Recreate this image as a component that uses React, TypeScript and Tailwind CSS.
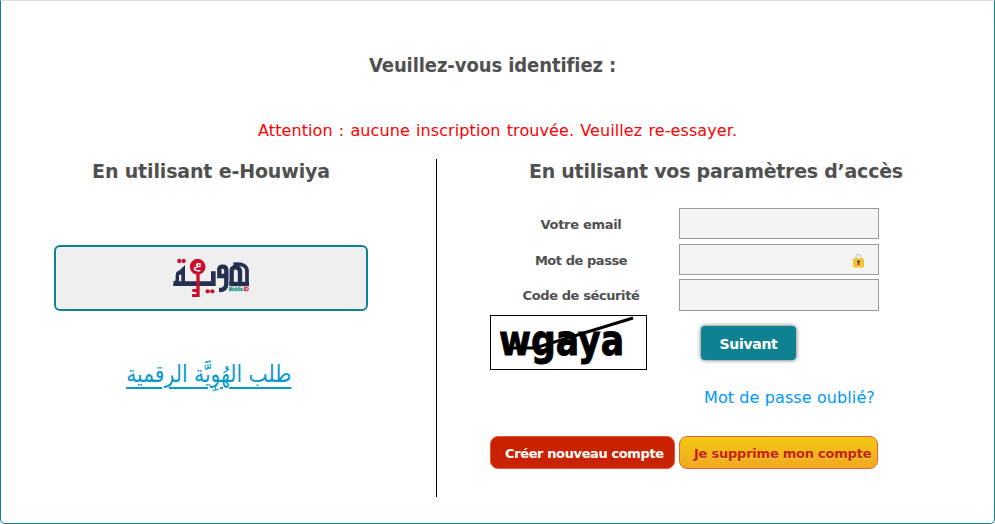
import React from "react";

const bold = "font-['DejaVu_Sans_Condensed','DejaVu_Sans',sans-serif] [font-stretch:condensed] font-bold whitespace-nowrap";
const wideBold = "font-['DejaVu_Sans',sans-serif] font-bold whitespace-nowrap";
const regular = "font-['DejaVu_Sans',sans-serif] whitespace-nowrap";

function HouwiyaLogo() {
  return (
    <svg className="ml-[2px] mb-[2px]" width="83.33" height="45" viewBox="390 60 250 135" fill="none">
      <g stroke="#252f50" strokeWidth="11">
        <path d="M400 146H520V109" strokeWidth="14" />
        <path d="M400 153L407 132V122Q407 109 419 106L435 90V140H424V119H417V140Z" fill="#252f50" stroke="none" />
        <path d="M559 123H538V103Q538 95 548 95Q559 95 559 106V146Q559 165 537 165" strokeWidth="13" />
        <path d="M568 147H627" strokeWidth="13" />
        <path d="M575 146V107Q575 97 586 97Q598 97 600 108V146" strokeWidth="13" />
        <path d="M580 88Q621 84 621 108V146" strokeWidth="11" />
      </g>
      <g fill="#c8102e">
        <circle cx="418" cy="78" r="6.5" />
        <circle cx="431" cy="78" r="6.5" />
        <circle cx="503" cy="169" r="6.5" />
        <circle cx="517" cy="169" r="6.5" />
        <circle cx="473" cy="95" r="23.5" />
        <path d="M469 116H479V186H456V177H469V171H457V162H469Z" />
      </g>
      <path d="M483 88Q472 83 470 90Q470 95 482 94Q464 96 463 102Q467 109 481 107" stroke="#fff" strokeWidth="4.5" />
      <text x="566" y="167" fontSize="15" fontFamily="Liberation Sans, sans-serif" fontWeight="bold" fill="#159487" stroke="#159487" strokeWidth="0.8" textLength="42" lengthAdjust="spacingAndGlyphs">Mobile</text>
      <text x="611" y="167" fontSize="15" fontFamily="Liberation Sans, sans-serif" fontWeight="bold" fill="#d32345" stroke="#d32345" strokeWidth="0.8" textLength="16" lengthAdjust="spacingAndGlyphs">ID</text>
    </svg>
  );
}

function Lock() {
  return (
    <svg className="mt-px" width="11" height="15" viewBox="0 0 11 15" fill="none">
      <path d="M3 6V4Q3 1.2 5.5 1.2Q8 1.2 8 4V6" stroke="#d4d4d4" strokeWidth="1.4" />
      <rect y="5.3" width="11" height="9.2" rx="1.3" fill="#fbc02d" />
      <path d="M4 8.2H7M5.5 7.5V12" stroke="#45405b" strokeWidth="1.5" />
    </svg>
  );
}

function Field({ label, className, spacing, children }: { label: string; className: string; spacing: string; children?: React.ReactNode }) {
  return (
    <div className={`flex items-center ${className}`}>
      <div className={`w-[189px] pr-[7px] pt-[2px] text-center text-[13px] text-[#505050] ${wideBold} ${spacing}`}>{label}</div>
      <div className="flex h-full w-[200px] items-center justify-end border border-[#999] bg-[#f4f4f4] pr-[14px]">{children}</div>
    </div>
  );
}

export default function App() {
  return (
    <div className="flex h-[524px] w-[995px] flex-col overflow-hidden rounded-b-[5px] border border-[#0f8292] border-t-[#ddd] bg-white">
      <h1 className={`mt-[49px] h-[30px] self-start pl-[368px] text-[20px] leading-[30px] tracking-[-0.08px] text-[#505050] ${bold}`}>Veuillez-vous identifiez :</h1>
      <p className={`mt-[39px] h-[24px] self-start pl-[257px] text-[16px] leading-[24px] tracking-[0.1px] [word-spacing:0.9px] text-[#f00] ${regular}`}>Attention : aucune inscription trouvée. Veuillez re-essayer.</p>
      <div className="mt-[16px] flex h-[338px]">
        <section className="flex w-[436px] flex-col items-center border-r border-black pr-[15px]">
          <h2 className={`h-[24px] text-[19px] leading-[24px] tracking-[-0.15px] text-[#505050] ${wideBold}`}>En utilisant e-Houwiya</h2>
          <button className="mt-[62px] flex h-[66px] w-[314px] items-center justify-center rounded-[6px] border-2 border-[#0f8292] bg-[#efefef]">
            <HouwiyaLogo />
          </button>
          <a dir="rtl" className="mr-[5px] mt-[43px] inline-block scale-x-[0.845] whitespace-nowrap font-['DejaVu_Sans',sans-serif] text-[24px] leading-[40px] text-[#0a99cc] underline decoration-2 underline-offset-[5px]">طلب الهُوِيَّة الرقمية</a>
        </section>
        <section className="flex flex-col pl-[53px]">
          <h2 className={`h-[24px] pl-[39px] text-[19px] leading-[24px] tracking-[-0.26px] text-[#505050] ${wideBold}`}>En utilisant vos paramètres d’accès</h2>
          <Field label="Votre email" spacing="tracking-[-0.3px]" className="mt-[25px] h-[31px]" />
          <Field label="Mot de passe" spacing="tracking-[-0.45px]" className="mt-[5px] h-[31px]"><Lock /></Field>
          <Field label="Code de sécurité" spacing="tracking-[-0.4px]" className="mt-[4px] h-[32px]" />
          <div className="mt-[4px] flex">
            <div className="h-[55px] w-[157px] border border-black bg-white">
              <svg className="overflow-visible" width="155" height="53" viewBox="0 0 155 53">
                <text x="8" y="39" fontFamily="DejaVu Sans, sans-serif" fontWeight="bold" fontSize="43" textLength="125" lengthAdjust="spacingAndGlyphs" fill="#000" stroke="#000" strokeWidth="1">wgaya</text>
                <path d="M20 32L44 32L142 2" fill="none" stroke="#000" strokeWidth="3" />
              </svg>
            </div>
            <button className={`ml-[54px] mt-[11px] h-[34px] w-[95px] rounded-[4px] bg-[#0f8292] text-[14px] leading-[36px] tracking-[-0.3px] text-white shadow-[0_0_4px_rgba(0,0,0,0.65)] ${wideBold}`}>Suivant</button>
          </div>
          <a className={`mt-[16px] h-[24px] pl-[214px] text-[16px] leading-[24px] tracking-[0.1px] text-[#0095ff] ${regular}`}>Mot de passe oublié?</a>
          <div className="mt-[26px] flex gap-[4px]">
            <button className={`h-[33px] w-[185px] rounded-[8px] border border-[#e95235] bg-[#c92200] pl-[14px] text-left text-[13px] leading-[33px] tracking-[-0.38px] text-white ${wideBold}`}>Créer nouveau compte</button>
            <button className={`h-[33px] w-[199px] rounded-[8px] border border-[#e9613b] bg-linear-to-b from-[#f0c911] to-[#f3a81f] pl-[14px] text-left text-[13px] leading-[33px] tracking-[-0.23px] text-[#c92200] [text-shadow:0_1px_0_rgba(255,255,255,0.4)] ${wideBold}`}>Je supprime mon compte</button>
          </div>
        </section>
      </div>
    </div>
  );
}
